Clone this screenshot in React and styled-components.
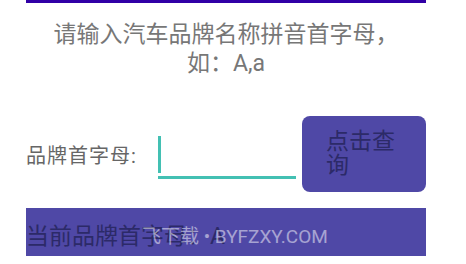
import React, { useState } from 'react';
import styled, { createGlobalStyle } from 'styled-components';

const GlobalStyle = createGlobalStyle`
  body {
    margin: 0;
    background: #ffffff;
    font-family: "Roboto", "Noto Sans CJK SC", sans-serif;
  }
`;

const Page = styled.div`
  width: 400px;
  margin-left: 26px;
`;

const ActionBarEdge = styled.div`
  height: 3px;
  background-color: #3100a6;
`;

const Hint = styled.div`
  margin-top: 17px;
  text-align: center;
  font-size: 23px;
  line-height: 29px;
  color: #777777;
`;

const QueryRow = styled.div`
  display: flex;
  align-items: center;
  margin-top: 38px;
`;

const Label = styled.span`
  font-size: 20px;
  letter-spacing: 1px;
  color: #666666;
  width: 132px;
`;

const Field = styled.div`
  position: relative;
  width: 138px;
  height: 50px;
  margin-right: 6px;
`;

const Input = styled.input`
  box-sizing: border-box;
  width: 100%;
  height: 100%;
  border: none;
  border-bottom: 3px solid #43c0b3;
  background: transparent;
  outline: none;
  padding: 0 6px;
  font-size: 20px;
  font-family: inherit;
  caret-color: transparent;
`;

const Caret = styled.span`
  position: absolute;
  left: 0;
  bottom: 6px;
  width: 3px;
  height: 37px;
  background-color: #43c0b3;
`;

const QueryButton = styled.button`
  width: 124px;
  height: 76px;
  border: none;
  border-radius: 8px;
  background-color: #4f48a6;
  color: #2c2a68;
  font-family: inherit;
  font-size: 23px;
  line-height: 24px;
  text-align: left;
  padding: 0 24px;
  cursor: pointer;
`;

const ResultBar = styled.div`
  position: relative;
  margin-top: 16px;
  height: 48px;
  display: flex;
  align-items: center;
  padding-top: 4px;
  box-sizing: border-box;
  background-color: #4f48a6;
  color: #2c2a68;
  font-size: 23px;
  overflow: hidden;
`;

const Watermark = styled.span`
  position: absolute;
  left: 116px;
  top: 18px;
  font-size: 19px;
  line-height: 22px;
  color: rgba(255, 255, 255, 0.5);
  white-space: nowrap;
  pointer-events: none;
`;

const App = () => {
  const [letter, setLetter] = useState('');

  return (
    <>
      <GlobalStyle />
      <Page>
        <ActionBarEdge />
        <Hint>
          请输入汽车品牌名称拼音首字母，
          <br />
          如：A,a
        </Hint>
        <QueryRow>
          <Label>品牌首字母:</Label>
          <Field>
            <Input value={letter} onChange={(e) => setLetter(e.target.value)} />
            <Caret />
          </Field>
          <QueryButton>点击查询</QueryButton>
        </QueryRow>
        <ResultBar>
          当前品牌首字母：A
          <Watermark>飞下载 • BYFZXY.COM</Watermark>
        </ResultBar>
      </Page>
    </>
  );
};

export default App;
